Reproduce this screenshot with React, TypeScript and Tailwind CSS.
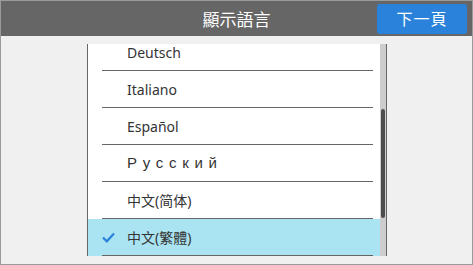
import React from 'react';

const languages = ['Deutsch', 'Italiano', 'Español', 'Русский', '中文(简体)', '中文(繁體)'];
const selected = '中文(繁體)';

const CheckIcon = () => (
    <svg width="13" height="11" viewBox="0 0 13 11" fill="none">
        <path d="M1 5.5L4.8 9.3L12 1.5" stroke="#2a82da" strokeWidth="2.2" />
    </svg>
);

export default function App() {
    return (
        <div
            className="w-[473px] h-[265px] border border-[#9a9a9a] bg-[#f0f0f0] flex flex-col overflow-hidden"
            style={{ fontFamily: '"Noto Sans", "Noto Sans CJK TC", sans-serif' }}
        >
            {/* Header */}
            <div className="relative h-[35px] bg-[#666666] flex items-center justify-center shrink-0">
                <span className="text-white text-[17px] leading-none" style={{ fontFamily: '"Noto Sans CJK TC", sans-serif' }}>
                    顯示語言
                </span>
                <button className="absolute right-[5px] top-[3px] w-[90px] h-[30px] rounded-[3px] bg-[#2a82da] text-white text-[16px] leading-none tracking-[1px]">
                    下一頁
                </button>
            </div>

            {/* List */}
            <div className="pt-[8px] pl-[86px]">
                <div className="w-[300px] h-[212px] border-l border-r border-[#666666] bg-white flex overflow-hidden">
                    <div className="flex-1 overflow-hidden">
                        <div className="-mt-[10px]">
                            {languages.map((lang) => {
                                const active = lang === selected;
                                const russian = lang === 'Русский';
                                return (
                                    <div key={lang} className={`h-[37px] relative flex items-center ${active ? 'bg-[#aae3f2]' : ''}`}>
                                        {active && (
                                            <span className="absolute left-[14px] top-[13px]">
                                                <CheckIcon />
                                            </span>
                                        )}
                                        <span
                                            className={`pl-[39px] text-[#333333] ${russian ? 'text-[15px] tracking-[0.38em] font-light' : 'text-[14px]'}`}
                                            style={russian ? { fontFamily: '"Liberation Sans", sans-serif' } : undefined}
                                        >
                                            {lang}
                                        </span>
                                        <div className="absolute bottom-0 left-[14px] right-[7px] h-px bg-[#666666]" />
                                    </div>
                                );
                            })}
                        </div>
                    </div>
                    {/* Scrollbar */}
                    <div className="w-[6px] bg-[#cdcdcd] relative shrink-0">
                        <div className="absolute left-[1px] top-[65px] w-[4px] h-[109px] rounded-full bg-[#4d4d4d]" />
                    </div>
                </div>
            </div>
        </div>
    );
}
